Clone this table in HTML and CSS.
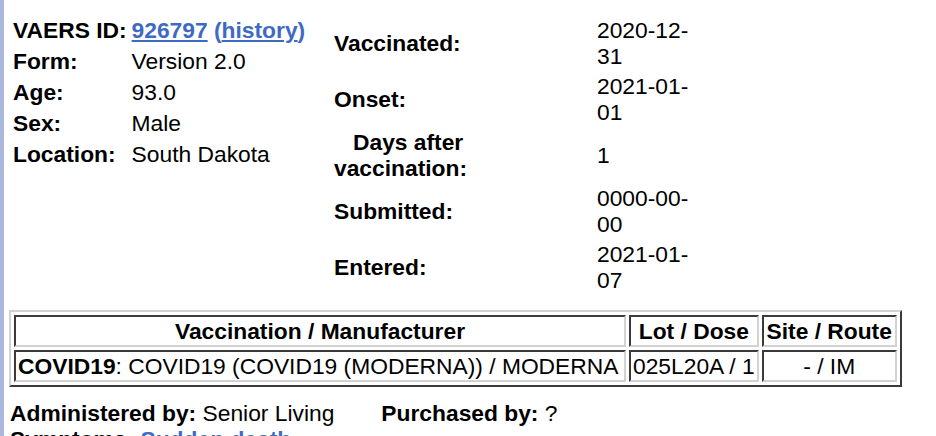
FILE: index.html
```html
<!DOCTYPE html>
<html>
<head>
<meta charset="utf-8">
<link rel="stylesheet" href="styles.css">
</head>
<body>
<div class="top">
  <div class="info">
    <div class="lbl">VAERS ID:</div><div class="val"><a class="lnk" href="#">926797</a> <span class="paren">(<a class="lnk" href="#">history</a>)</span></div>
    <div class="lbl">Form:</div><div class="val">Version 2.0</div>
    <div class="lbl">Age:</div><div class="val">93.0</div>
    <div class="lbl">Sex:</div><div class="val">Male</div>
    <div class="lbl">Location:</div><div class="val">South Dakota</div>
  </div>
  <div class="dates">
    <div class="dl">Vaccinated:</div><div class="dv">2020-12-<wbr>31</div>
    <div class="dl">Onset:</div><div class="dv">2021-01-<wbr>01</div>
    <div class="dl">&nbsp;&nbsp;&nbsp;Days after<br>vaccination:</div><div class="dv dv-mid">1</div>
    <div class="dl">Submitted:</div><div class="dv">0000-00-<wbr>00</div>
    <div class="dl">Entered:</div><div class="dv">2021-01-<wbr>07</div>
  </div>
</div>
<table class="vax">
  <tr>
    <th class="c1">Vaccination / Manufacturer</th>
    <th class="c2">Lot / Dose</th>
    <th class="c3">Site / Route</th>
  </tr>
  <tr>
    <td class="c1"><b>COVID19</b>: COVID19 (COVID19 (MODERNA)) / MODERNA</td>
    <td class="c2">025L20A / 1</td>
    <td class="c3 mid">- / IM</td>
  </tr>
</table>
<div class="admin">
  <span><b>Administered by:</b> Senior Living</span>
  <span><b>Purchased by:</b> ?</span>
</div>
<div class="symp"><b>Symptoms:</b> <a class="lnk" href="#">Sudden death</a></div>
</body>
</html>
```

FILE: styles.css
```css
html, body {
  height: 100%;
}
body {
  margin: 0;
  box-sizing: border-box;
  min-height: 100vh;
  border-left: 4px solid #aab8de;
  background: #fff;
  color: #000;
  font-family: "Liberation Sans", Arial, Helvetica, sans-serif;
  font-size: 22.8px;
  line-height: 26px;
}
.top {
  display: flex;
  align-items: flex-start;
  padding: 14.75px 0 0 9px;
}
.info {
  width: 321px;
  display: grid;
  grid-template-columns: max-content max-content;
  column-gap: 5px;
}
.info > div {
  padding: 2.5px 0;
  white-space: nowrap;
}
.lbl, .dl {
  font-weight: bold;
}
.dates {
  display: grid;
  grid-template-columns: 258px 96px;
  column-gap: 5px;
}
.dates > div {
  padding: 2px 0;
}
.dl {
  align-self: center;
}
.dv-mid {
  align-self: center;
}
.lnk {
  color: #3e6ac4;
  font-weight: bold;
  text-decoration: underline;
}
.paren {
  color: #3e6ac4;
  font-weight: bold;
}
.vax {
  margin: 15.25px 0 0 5px;
  border-collapse: separate;
  border-spacing: 3px;
  border: 2px solid;
  border-color: #d2d2d2 #3a3a3a #3a3a3a #d2d2d2;
}
.vax th, .vax td {
  box-sizing: border-box;
  border: 2px solid;
  border-color: #3a3a3a #d2d2d2 #d2d2d2 #3a3a3a;
  padding: 1px 2px;
  white-space: nowrap;
  text-align: left;
}
.vax th {
  text-align: center;
  font-weight: bold;
}
.vax .mid {
  text-align: center;
}
.c1 { width: 612px; }
.c2 { width: 128px; }
.c3 { width: 135px; }
.admin {
  display: flex;
  gap: 47px;
  margin-top: 13px;
  padding-left: 6px;
}
.symp {
  padding-left: 6px;
}
```
